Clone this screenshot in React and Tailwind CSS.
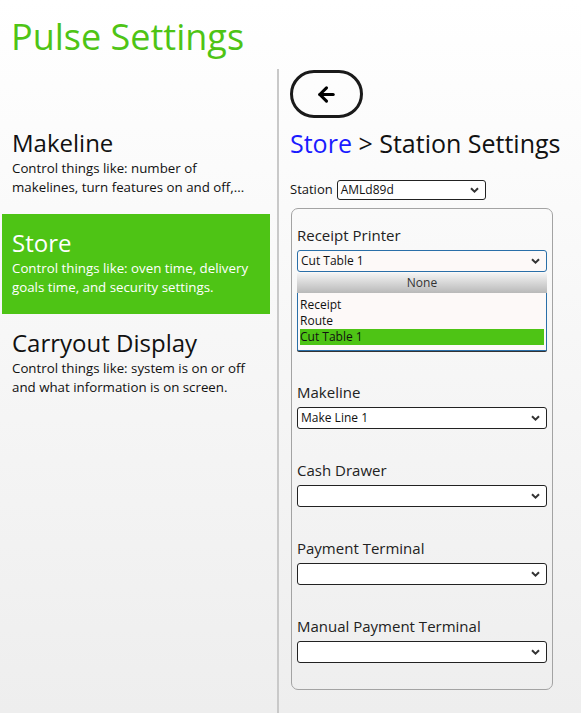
import React from 'react';
import { ArrowLeft } from 'lucide-react';

const Chevron = () => (
    <svg width="9" height="6" viewBox="0 0 9 6" className="shrink-0">
        <path d="M1 1.2 L4.5 4.6 L8 1.2" fill="none" stroke="#333" strokeWidth="2" />
    </svg>
);

const FakeSelect = ({ value, focused }) => (
    <div
        className={`flex h-[22px] items-center justify-between rounded-[3px] border pl-[3px] pr-[6px] text-[12px] text-[#111] ${
            focused ? 'border-[#2a6fa8] bg-[#fdf9f8]' : 'border-[#222] bg-white'
        }`}
    >
        <span>{value}</span>
        <Chevron />
    </div>
);

const NavItem = ({ title, desc, active }) => (
    <div className={`ml-[2px] h-[100px] w-[268px] pl-[10px] pt-[13px] ${active ? 'bg-[#4ec415] text-white' : 'text-[#111]'}`}>
        <div className="text-[24px] leading-[32px]">{title}</div>
        {desc.map((line) => (
            <div key={line} className="text-[13.3px] leading-[19px]">{line}</div>
        ))}
    </div>
);

const Field = ({ label, children, first }) => (
    <div className={first ? '' : 'mt-[31px]'}>
        <div className="text-[15px] leading-[20px] text-[#222]">{label}</div>
        <div className="mt-[5px]">{children}</div>
    </div>
);

const App = () => {
    return (
        <div className="flex h-[713px] w-[581px] flex-col overflow-hidden bg-gradient-to-b from-white to-[#eeeeee]" style={{ fontFamily: '"Open Sans", "Noto Sans", sans-serif' }}>
            {/* Header */}
            <div className="h-[69px] pl-[11px] pt-[13px]">
                <h1 className="text-[36px] leading-[48px] text-[#4ec415]">Pulse Settings</h1>
            </div>

            <div className="flex flex-1">
                {/* Left nav */}
                <div className="w-[277px] pt-[45px]">
                    <NavItem title="Makeline" desc={['Control things like: number of', 'makelines, turn features on and off,...']} />
                    <NavItem active title="Store" desc={['Control things like: oven time, delivery', 'goals time, and security settings.']} />
                    <NavItem title="Carryout Display" desc={['Control things like: system is on or off', 'and what information is on screen.']} />
                </div>

                <div className="w-[2px] bg-[#c9c9c9]" />

                {/* Right panel */}
                <div className="flex-1 pl-[11px] pt-[1px]">
                    <button className="flex h-[48px] w-[73px] items-center justify-center rounded-full border-[3px] border-[#1a1a1a]">
                        <ArrowLeft size={23} strokeWidth={3.2} className="text-black" />
                    </button>

                    <div className="mt-[9px] text-[25px] leading-[32px] text-[#111]">
                        <span className="text-[#1a1aff]">Store</span> &gt; Station Settings
                    </div>

                    <div className="mt-[21px] flex items-center">
                        <span className="mr-[4px] text-[13px] text-[#111]">Station</span>
                        <div className="flex h-[20px] w-[149px] items-center justify-between rounded-[3px] border border-[#222] bg-white pl-[3px] pr-[6px] text-[12px] text-[#111]">
                            <span>AMLd89d</span>
                            <Chevron />
                        </div>
                    </div>

                    <div className="mt-[8px] ml-[1px] h-[482px] w-[262px] rounded-[7px] border border-[#a3a3a3] px-[5px] pt-[16px]">
                        <Field first label="Receipt Printer">
                            <FakeSelect focused value="Cut Table 1" />
                            {/* open listbox */}
                            <div className="mt-[1px] h-[20px] bg-gradient-to-b from-[#f4f4f4] to-[#b9b9b9] text-center text-[12px] leading-[20px] text-[#333]">None</div>
                            <div className="rounded-b-[2px] border border-t-0 border-[#2a6fa8] bg-[#fdf9f8] px-[2px] pb-[5px] pt-[4px] text-[12px] leading-[16px] text-[#111] shadow-[0_1px_0_#333]">
                                <div>Receipt</div>
                                <div>Route</div>
                                <div className="bg-[#4ec415]">Cut Table 1</div>
                            </div>
                        </Field>
                        <Field label="Makeline">
                            <FakeSelect value="Make Line 1" />
                        </Field>
                        <Field label="Cash Drawer">
                            <FakeSelect value="" />
                        </Field>
                        <Field label="Payment Terminal">
                            <FakeSelect value="" />
                        </Field>
                        <Field label="Manual Payment Terminal">
                            <FakeSelect value="" />
                        </Field>
                    </div>
                </div>
            </div>
        </div>
    );
};

export default App;
